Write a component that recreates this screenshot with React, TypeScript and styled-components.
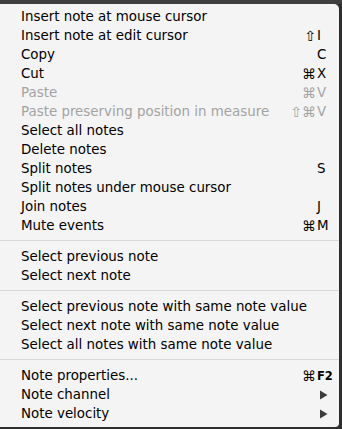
import React from 'react';
import styled, { createGlobalStyle } from 'styled-components';

const GlobalStyle = createGlobalStyle`
  html, body {
    margin: 0;
    padding: 0;
    background: #2e2e2e;
  }
`;

const Page = styled.div`
  width: 342px;
  height: 429px;
  background: #2e2e2e;
  border-top: 4px solid #3f3f3f;
  box-sizing: border-box;
  overflow: hidden;
`;

const Menu = styled.div`
  width: 339px;
  background: #f4f4f4;
  border-radius: 0 5px 4px 0;
  padding: 3px 0 4px;
  font-family: 'DejaVu Sans', 'Liberation Sans', sans-serif;
  font-size: 13.4px;
  color: #000;
`;

const Item = styled.div<{ disabled?: boolean }>`
  display: flex;
  align-items: center;
  height: 19px;
  padding: 0 10px 0 21px;
  color: ${(p) => (p.disabled ? '#a3a3a3' : '#000')};
`;

const Label = styled.span`
  flex: 1;
  white-space: nowrap;
`;

const Shortcut = styled.span`
  display: flex;
  align-items: center;
`;

const Mods = styled.span`
  text-align: right;
  white-space: nowrap;
  font-size: 14px;
  margin-right: 1px;
`;

const Key = styled.span<{ small?: boolean }>`
  width: 12px;
  text-align: left;
  white-space: nowrap;
  font-size: ${(p) => (p.small ? '11.5px' : 'inherit')};
  font-weight: ${(p) => (p.small ? 'bold' : 'normal')};
`;

const Separator = styled.div`
  height: 1px;
  background: #d8d8d8;
  margin: 5px 0 6px;
`;

const Arrow = styled.svg`
  width: 9px;
  height: 10px;
  margin-right: 1px;
  fill: #3c3c3c;
`;

type Entry =
  | { label: string; mods?: string; keyName?: string; disabled?: boolean; submenu?: boolean }
  | 'sep';

const entries: Entry[] = [
  { label: 'Insert note at mouse cursor' },
  { label: 'Insert note at edit cursor', mods: '⇧', keyName: 'I' },
  { label: 'Copy', keyName: 'C' },
  { label: 'Cut', mods: '⌘', keyName: 'X' },
  { label: 'Paste', mods: '⌘', keyName: 'V', disabled: true },
  { label: 'Paste preserving position in measure', mods: '⇧⌘', keyName: 'V', disabled: true },
  { label: 'Select all notes' },
  { label: 'Delete notes' },
  { label: 'Split notes', keyName: 'S' },
  { label: 'Split notes under mouse cursor' },
  { label: 'Join notes', keyName: 'J' },
  { label: 'Mute events', mods: '⌘', keyName: 'M' },
  'sep',
  { label: 'Select previous note' },
  { label: 'Select next note' },
  'sep',
  { label: 'Select previous note with same note value' },
  { label: 'Select next note with same note value' },
  { label: 'Select all notes with same note value' },
  'sep',
  { label: 'Note properties...', mods: '⌘', keyName: 'F2' },
  { label: 'Note channel', submenu: true },
  { label: 'Note velocity', submenu: true },
];

const App: React.FC = () => {
  return (
    <Page>
      <GlobalStyle />
      <Menu>
        {entries.map((e, i) => {
          if (e === 'sep') return <Separator key={i} />;
          return (
            <Item key={i} disabled={e.disabled}>
              <Label>{e.label}</Label>
              {e.submenu ? (
                <Arrow viewBox="0 0 9 10">
                  <path d="M1 0.5 L8.5 5 L1 9.5 Z" />
                </Arrow>
              ) : (
                (e.keyName || e.mods) && (
                  <Shortcut>
                    <Mods>{e.mods}</Mods>
                    <Key small={e.keyName === 'F2'}>{e.keyName}</Key>
                  </Shortcut>
                )
              )}
            </Item>
          );
        })}
      </Menu>
    </Page>
  );
};

export default App;
